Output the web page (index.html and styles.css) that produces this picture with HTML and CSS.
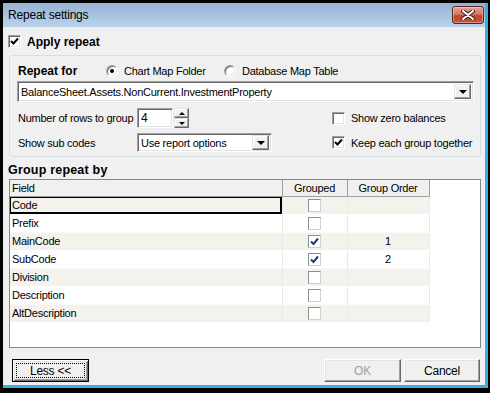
FILE: index.html
```html
<!DOCTYPE html>
<html lang="en">
<head>
<meta charset="utf-8">
<title>Repeat settings</title>
<link rel="stylesheet" href="styles.css">
</head>
<body>
<div class="frame">
    <div class="win">
        <div class="titlebar">
            <span class="title">Repeat settings</span>
            <span class="close">
                <svg width="14" height="10" viewBox="0 0 14 10"><path d="M2 1 L12 9 M12 1 L2 9" stroke="#4a2020" stroke-width="4" stroke-linecap="round"/><path d="M2 1 L12 9 M12 1 L2 9" stroke="#fff" stroke-width="2" stroke-linecap="round"/></svg>
            </span>
        </div>
        <div class="client">
            <div class="apply">
                <span class="chk3d on"><svg width="9" height="9" viewBox="0 0 9 9"><path d="M1 4 L3.5 6.5 L8 1.5" fill="none" stroke="#000" stroke-width="2"/></svg></span>
                <b>Apply repeat</b>
            </div>

            <div class="groupbox">
                <div class="row1">
                    <b class="lbl">Repeat for</b>
                    <span class="opt"><span class="radio on"></span>Chart Map Folder</span>
                    <span class="opt"><span class="radio"></span>Database Map Table</span>
                </div>
                <div class="combo wide">
                    <span class="val">BalanceSheet.Assets.NonCurrent.InvestmentProperty</span>
                    <span class="drop"><i class="tri"></i></span>
                </div>
                <div class="row">
                    <span class="rlbl">Number of rows to group</span>
                    <span class="ctl">
                        <span class="spin-in">4</span>
                        <span class="spin">
                            <span class="sbtn"><i class="up"></i></span>
                            <span class="sbtn"><i class="tri small"></i></span>
                        </span>
                    </span>
                    <span class="opt"><span class="chk3d"></span>Show zero balances</span>
                </div>
                <div class="row r4">
                    <span class="rlbl">Show sub codes</span>
                    <span class="ctl">
                        <span class="combo small">
                            <span class="val">Use report options</span>
                            <span class="drop"><i class="tri"></i></span>
                        </span>
                    </span>
                    <span class="opt"><span class="chk3d on"><svg width="9" height="9" viewBox="0 0 9 9"><path d="M1 4 L3.5 6.5 L8 1.5" fill="none" stroke="#000" stroke-width="2"/></svg></span>Keep each group together</span>
                </div>
            </div>

            <div class="sect">Group repeat by</div>
            <div class="gridbox">
                <table class="grid">
                    <colgroup><col class="w-field"><col class="w-grp"><col class="w-ord"></colgroup>
                    <thead>
                        <tr><th class="th-field">Field</th><th>Grouped</th><th>Group Order</th></tr>
                    </thead>
                    <tbody>
                        <tr class="alt"><td class="focus">Code</td><td class="cc"><span class="gchk"></span></td><td></td></tr>
                        <tr><td>Prefix</td><td class="cc"><span class="gchk"></span></td><td></td></tr>
                        <tr class="alt"><td>MainCode</td><td class="cc"><span class="gchk"><svg width="9" height="9" viewBox="0 0 9 9"><path d="M1 4.5 L3.5 7 L8 1.5" fill="none" stroke="#1c3f78" stroke-width="2"/></svg></span></td><td class="num">1</td></tr>
                        <tr><td>SubCode</td><td class="cc"><span class="gchk"><svg width="9" height="9" viewBox="0 0 9 9"><path d="M1 4.5 L3.5 7 L8 1.5" fill="none" stroke="#1c3f78" stroke-width="2"/></svg></span></td><td class="num">2</td></tr>
                        <tr class="alt"><td>Division</td><td class="cc"><span class="gchk"></span></td><td></td></tr>
                        <tr><td>Description</td><td class="cc"><span class="gchk"></span></td><td></td></tr>
                        <tr class="alt"><td>AltDescription</td><td class="cc"><span class="gchk"></span></td><td></td></tr>
                    </tbody>
                </table>
            </div>

            <div class="btnbar">
                <span class="btn default"><span class="focusrect">Less &lt;&lt;</span></span>
                <span class="btnright">
                    <span class="btn disabled">OK</span>
                    <span class="btn">Cancel</span>
                </span>
            </div>
        </div>
    </div>
</div>
</body>
</html>
```

FILE: styles.css
```css
*{box-sizing: border-box;margin: 0;padding: 0;}
body{background: #000;font-family: "Liberation Sans", Arial, sans-serif;font-size: 11px;letter-spacing: -0.25px;color: #000;}
b{font-weight: bold;font-size: 12px;letter-spacing: 0;}

/* window frame */
.frame{width: 490px;height: 393px;padding: 3px 2px 5px 3px;background: #000;}
.win{height: 100%;display: flex;flex-direction: column;background: #f0f0f0;border-right: 3px solid #3aaee2;border-bottom: 3px solid #3aaee2;}
.titlebar{height: 24px;flex: none;display: flex;justify-content: space-between;padding: 0 1px 0 5px;background: linear-gradient(#96b1d2, #bad3ec);}
.title{font-size: 12px;line-height: 24px;letter-spacing: -0.2px;color: #000;}
.close{width: 32px;height: 18px;margin-top: 3px;display: flex;align-items: center;justify-content: center;border: 1px solid #5a2520;border-radius: 3px;background: linear-gradient(#e2a59a 0%, #d3796a 45%, #c0442f 55%, #c8583f 100%);box-shadow: inset 0 0 0 1px rgba(255,255,255,.35);}

.client{flex: 1;display: flex;flex-direction: column;}

/* classic controls */
.chk3d{width: 13px;height: 13px;flex: none;display: inline-flex;align-items: center;justify-content: center;background: #fff;border: 1px solid;border-color: #a0a0a0 #fff #fff #a0a0a0;box-shadow: inset 1px 1px #696969, inset -1px -1px #e3e3e3;}
.radio{width: 12px;height: 12px;flex: none;display: inline-flex;align-items: center;justify-content: center;border-radius: 50%;background: #fff;border: 1px solid;border-color: #a0a0a0 #fff #fff #a0a0a0;box-shadow: inset 1px 1px #696969, inset -1px -1px #e3e3e3;}
.radio.on::after{content: "";width: 4px;height: 4px;border-radius: 50%;background: #000;}
.tri{width: 0;height: 0;border-left: 4px solid transparent;border-right: 4px solid transparent;border-top: 4px solid #000;}
.tri.small{border-left-width: 3px;border-right-width: 3px;border-top-width: 3px;}
.up{width: 0;height: 0;border-left: 3px solid transparent;border-right: 3px solid transparent;border-bottom: 3px solid #000;}

.apply{display: flex;align-items: center;gap: 6px;margin: 8px 0 0 5px;height: 13px;}

.groupbox{margin: 7px 0 0 6px;width: 472px;height: 102px;border: 1px solid #d5dfe5;border-radius: 3px;padding: 8px 0 0 7px;}
.row1{display: flex;align-items: center;height: 14px;padding-left: 1px;}
.row1 .lbl{width: 88px;}
.row1 .opt{width: 118px;}
.opt{display: flex;align-items: center;gap: 6px;white-space: nowrap;}

.combo{display: flex;align-items: center;justify-content: space-between;background: #fff;border: 1px solid;border-color: #a0a0a0 #fff #fff #a0a0a0;box-shadow: inset 1px 1px #696969, inset -1px -1px #e3e3e3;padding: 2px 2px 2px 3px;white-space: nowrap;}
.combo.wide{width: 457px;height: 21px;margin-top: 3px;}
.combo.small{width: 135px;height: 19px;padding: 1px 2px 1px 3px;}
.drop{width: 17px;height: 100%;display: flex;align-items: center;justify-content: center;background: #f0f0f0;border: 1px solid;border-color: #e3e3e3 #696969 #696969 #e3e3e3;box-shadow: inset -1px -1px #a0a0a0, inset 1px 1px #fff;}

.row{display: grid;grid-template-columns: 119px 195px auto;align-items: center;height: 20px;margin-top: 6px;padding-left: 1px;white-space: nowrap;}
.row.r4{height: 19px;margin-top: 5px;}
.ctl{display: flex;align-items: center;height: 100%;}
.spin-in{width: 36px;height: 20px;background: #fff;border: 1px solid;border-color: #a0a0a0 #fff #fff #a0a0a0;box-shadow: inset 1px 1px #696969, inset -1px -1px #e3e3e3;padding: 2px 3px;font-size: 12px;}
.spin{display: flex;flex-direction: column;margin-left: 1px;}
.sbtn{width: 15px;height: 10px;display: flex;align-items: center;justify-content: center;background: #f0f0f0;border: 1px solid;border-color: #e3e3e3 #696969 #696969 #e3e3e3;box-shadow: inset -1px -1px #a0a0a0, inset 1px 1px #fff;}

/* grid */
.sect{margin: 6px 0 0 5px;height: 14px;line-height: 14px;font-weight: bold;font-size: 12.5px;letter-spacing: 0.2px;}
.gridbox{margin: 2px 0 0 6px;width: 472px;height: 169px;background: #fff;border: 1px solid #828790;}
.grid{border-collapse: collapse;table-layout: fixed;width: 419px;}
.w-field{width: 272px;}
.w-grp{width: 65px;}
.w-ord{width: 82px;}
.grid th{height: 16px;font-weight: normal;font-size: 11px;background: #f0f0f0;border-right: 1px solid #a0a0a0;border-bottom: 1px solid #a0a0a0;padding: 0;text-align: center;}
.grid th.th-field{text-align: left;padding-left: 2px;}
.grid td{height: 18px;padding: 0 0 0 2px;border-right: 1px solid #ebe9e3;border-bottom: 1px solid #faf9f6;white-space: nowrap;}
.grid tr.alt td{background: #f4f2ec;border-bottom-color: #fff;}
.grid td.focus{box-shadow: inset 1px 1px #000, inset -2px -2px #000;}
.grid td.cc{text-align: center;padding: 0;}
.grid td.num{text-align: center;padding: 0;}
.gchk{width: 13px;height: 13px;display: inline-flex;align-items: center;justify-content: center;vertical-align: middle;background: #fff;border: 1px solid;border-color: #8f8f8f #cfcfcf #cfcfcf #8f8f8f;}

/* buttons */
.btnbar{display: flex;justify-content: space-between;margin-top: 11px;padding: 0 5px 0 9px;}
.btnright{display: flex;gap: 3px;}
.btn{width: 77px;height: 23px;display: flex;align-items: center;justify-content: center;background: #f0f0f0;border: 1px solid;border-color: #fff #696969 #696969 #fff;box-shadow: inset -1px -1px #a0a0a0, inset 1px 1px #e3e3e3;font-size: 12px;}
.btn + .btn{width: 76px;}
.btn.disabled{color: #a0a0a0;}
.btn.default{border-color: #000;box-shadow: inset 1px 1px #fff, inset -1px -1px #696969, inset 2px 2px #e3e3e3, inset -2px -2px #a0a0a0;padding: 3px;}
.focusrect{flex: 1;align-self: stretch;display: flex;align-items: center;justify-content: center;border: 1px dotted #000;}
```
